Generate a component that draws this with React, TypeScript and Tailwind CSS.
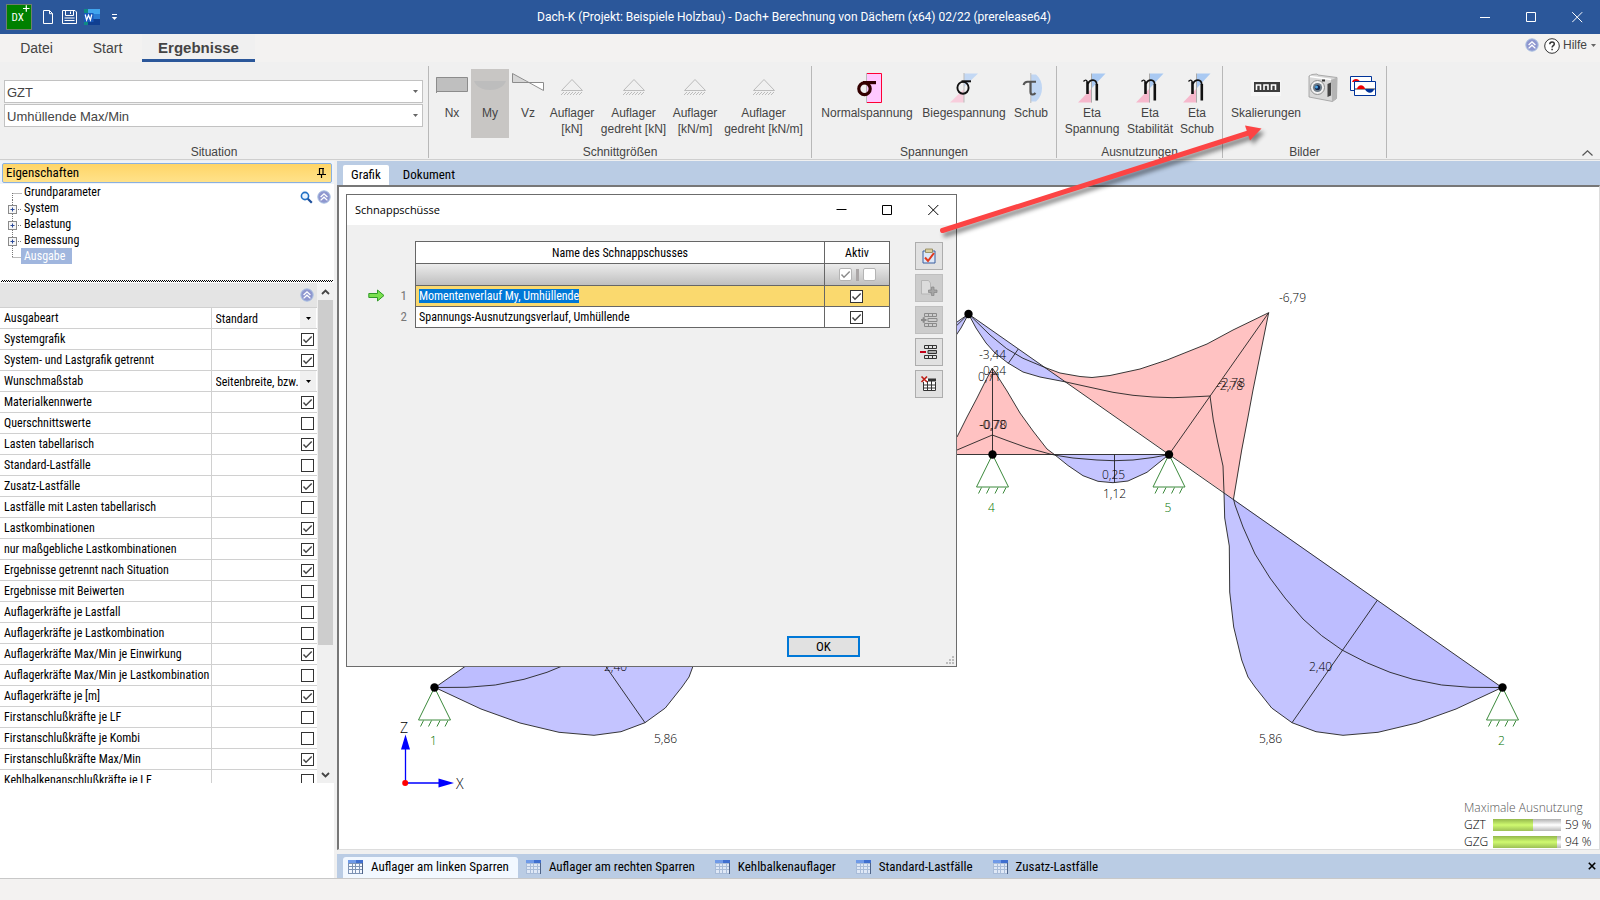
import type { ReactNode } from "react";

const ARIAL = "font-['Liberation_Sans',Arial,sans-serif]";
const COND = "font-['Roboto_Condensed','Liberation_Sans_Narrow','Liberation_Sans',sans-serif]";
const HUMANIST = "font-['Open_Sans','Noto_Sans',sans-serif]";

/* ---------- shared controls ---------- */

function Check({ label, on, dim }: { label: string; on: boolean; dim?: boolean }) {
  return (
    <span className="relative block size-[13px]">
      <input
        type="checkbox"
        defaultChecked={on}
        aria-label={label}
        className={`peer block size-[13px] appearance-none border bg-white ${dim ? "rounded-[2px] border-[#b4b4b4]" : "border-[#333]"}`}
      />
      <svg viewBox="0 0 13 13" className="pointer-events-none absolute inset-0 hidden size-[13px] peer-checked:block">
        <path d="M2.5 6.5 5 9.3 10.7 3.4" fill="none" stroke={dim ? "#8a8a8a" : "#444"} strokeWidth="1.4" />
      </svg>
    </span>
  );
}

function CollapseIcon() {
  return (
    <svg viewBox="0 0 14 14" className="size-[14px] shrink-0">
      <circle cx="7" cy="7" r="6.2" fill="#8f97cf" stroke="#a9c0e2" strokeWidth="1" />
      <path d="M3.6 7 7 3.8 10.4 7M3.6 10.4 7 7.2 10.4 10.4" fill="none" stroke="#fff" strokeWidth="1.3" />
    </svg>
  );
}

/* ---------- title bar ---------- */

function TitleBar() {
  const win = "flex h-full w-[46px] items-center justify-center";
  return (
    <header className={`grid h-[34px] shrink-0 grid-cols-[1fr_auto_1fr] items-center bg-[#2b579a] text-white ${ARIAL}`}>
      <div className="flex items-center pl-[6px]">
        <svg viewBox="0 0 26 26" className="size-[26px]" aria-label="Dach+">
          <rect x=".5" y=".5" width="25" height="25" fill="#008000" stroke="#6f7f6f" />
          <text x="5.500" y="16.500" fill="#fff" fontSize="11" fontFamily="Roboto Condensed">DX</text>
          <path d="M17 4.500h6.500M20.300 1.300v6.500" stroke="#fff" strokeWidth="1.200" />
        </svg>
        <button aria-label="Neu" className="ml-[11px]">
          <svg viewBox="0 0 12 16" className="h-[16px] w-[12px]">
            <path d="M.5 1.500h6l3 3V14.500H.5zM6.500 1.500v3.200h3" fill="none" stroke="#fff" />
          </svg>
        </button>
        <button aria-label="Speichern" className="ml-[7px]">
          <svg viewBox="0 0 16 16" className="size-[16px]">
            <path d="M.5 1.500h12.500l1.500 1.500v11.500h-14zM3.500 1.500v5h8v-5M8.500 2.500v2.500M2.500 9h10M2.500 11.500h10" fill="none" stroke="#fff" />
          </svg>
        </button>
        <button aria-label="Word" className="ml-[6px]">
          <svg viewBox="0 0 16 16" className="size-[16px]">
            <path d="M4 0h12v5H4z" fill="#41a5ee" />
            <path d="M4 5h12v5H4z" fill="#2b7cd3" />
            <path d="M4 10h12v6H4z" fill="#103f91" />
            <path d="M0 0h4v16H0z" fill="#0f8a84" />
            <path d="M0 4h9.500v9H0z" fill="#185abd" />
            <path d="m1.200 5.500 1.400 5.500L4.500 6.200 6.400 11l1.400-5.500" fill="none" stroke="#fff" strokeWidth="1.200" />
          </svg>
        </button>
        <button aria-label="Schnellzugriff anpassen" className="ml-[11px]">
          <svg viewBox="0 0 7 7" className="size-[7px]">
            <path d="M1 .5h5" stroke="#fff" />
            <path d="M.8 3h5.400L3.500 6z" fill="#fff" />
          </svg>
        </button>
      </div>
      <h1 className="pr-[12px] font-['Roboto','Liberation_Sans',sans-serif] text-[12px] leading-[16px] font-normal">
        Dach-K (Projekt: Beispiele Holzbau) - Dach+ Berechnung von Dächern (x64) 02/22 (prerelease64)
      </h1>
      <div className="flex h-full justify-end">
        <button aria-label="Minimieren" className={win}>
          <svg viewBox="0 0 11 11" className="size-[11px]"><path d="M0 5.500h10" stroke="#fff" /></svg>
        </button>
        <button aria-label="Maximieren" className={win}>
          <svg viewBox="0 0 11 11" className="size-[11px]"><path d="M.5.500h9v9H.5z" fill="none" stroke="#fff" /></svg>
        </button>
        <button aria-label="Schließen" className={win}>
          <svg viewBox="0 0 11 11" className="size-[11px]"><path d="m.2.200 10 10m0-10-10 10" stroke="#fff" /></svg>
        </button>
      </div>
    </header>
  );
}

function MenuTabs() {
  return (
    <nav className={`flex h-[28px] shrink-0 bg-[#f3f2f1] text-[14px] text-[#444] ${ARIAL}`}>
      <a href="#datei" className="w-[73px] text-center leading-[28px]">Datei</a>
      <a href="#start" className="w-[69px] text-center leading-[28px]">Start</a>
      <a href="#ergebnisse" className="w-[113px] border-b-[3px] border-[#2b579a] bg-[#f0f0f0] text-center text-[15px] leading-[28px] font-bold">
        Ergebnisse
      </a>
      <div className="ml-auto flex items-start gap-[5px] pt-[3px] pr-[4px]">
        <button aria-label="Menüband" className="pt-[1px]"><CollapseIcon /></button>
        <button className="flex items-center gap-[3px] text-[12px] leading-[17px]">
          <svg viewBox="0 0 16 16" className="size-[16px]">
            <circle cx="8" cy="8" r="7.300" fill="#fff" stroke="#333" />
            <path d="M5.800 6.200c0-3 4.500-3 4.500-.2 0 1.700-2.200 1.700-2.200 3.500M8.100 10.800v1.500" fill="none" stroke="#333" strokeWidth="1.500" />
          </svg>
          Hilfe
          <svg viewBox="0 0 5 3" className="ml-[1px] h-[3px] w-[5px]"><path d="M0 0h5L2.500 3z" fill="#666" /></svg>
        </button>
      </div>
    </nav>
  );
}

/* ---------- ribbon ---------- */

function Icon({ children }: { children: ReactNode }) {
  return <svg viewBox="0 0 32 32" className="size-[32px] shrink-0 overflow-visible">{children}</svg>;
}

function BearingIcon() {
  return (
    <Icon>
      <path d="M16 7.500 5.500 18.500h21z" fill="none" stroke="#bbb" />
      <path d="m5 23 3-3m0 3 3-3m0 3 3-3m0 3 3-3m0 3 3-3m0 3 3-3m0 3 3-3" stroke="#bbb" />
    </Icon>
  );
}

/* Greek letters are drawn as strokes, like the other ribbon symbols. */
function EtaIcon() {
  return (
    <Icon>
      <path d="M16 1.500h13.500L16 16z" fill="#a9c9f2" />
      <path d="M2 30.500 16 16v14.500z" fill="#f6b8cc" />
      <path d="M15.500 1.500v29" stroke="#aaa" />
      <path d="M7.500 9.500C9 7.500 11 7.500 11.200 10" fill="none" stroke="#111" strokeWidth="1.300" />
      <path d="M11.500 9.500V22M20.800 12v16.500" fill="none" stroke="#111" strokeWidth="2.600" />
      <path d="M12 12c2-5 8.500-5.500 8.800 1" fill="none" stroke="#111" strokeWidth="1.700" />
    </Icon>
  );
}

function RibbonButton({ w, icon, label, active }: { w: string; icon: ReactNode; label: string[]; active?: boolean }) {
  return (
    <button className={`flex h-[69px] shrink-0 flex-col items-center pt-[3px] leading-[16px] ${w} ${active ? "bg-[#c8c6c4]" : ""}`}>
      {icon}
      <span className="mt-[1px] flex flex-col items-center whitespace-nowrap">
        {label.map((l) => <span key={l}>{l}</span>)}
      </span>
    </button>
  );
}

function Group({ w, title, children }: { w: string; title: string; children: ReactNode }) {
  return (
    <section className={`flex h-[92px] shrink-0 flex-col justify-between border-r border-[#b8b8b8] ${w}`}>
      {children}
      <h2 className="text-center text-[12px] leading-[12px] font-normal">{title}</h2>
    </section>
  );
}

function Combo({ label, value }: { label: string; value: string }) {
  return (
    <span className="relative block">
      <select aria-label={label} className="block h-[23px] w-full appearance-none border border-[#c2c2c2] bg-white px-[2px] pt-[2px] text-[13px] text-[#444]">
        <option>{value}</option>
      </select>
      <svg viewBox="0 0 5 3" className="pointer-events-none absolute top-[10px] right-[5px] h-[3px] w-[5px]"><path d="M0 0h5L2.500 3z" fill="#666" /></svg>
    </span>
  );
}

function Ribbon() {
  return (
    <div className={`flex h-[98px] shrink-0 border-b border-[#cfcfcf] bg-[#f0f0f0] pt-[4px] text-[12px] text-[#444] ${ARIAL}`}>
      <Group w="w-[429px]" title="Situation">
        <div className="flex flex-col gap-[1px] pt-[14px] pr-[5px] pl-[4px]">
          <Combo label="Situation" value="GZT" />
          <Combo label="Umhüllende" value="Umhüllende Max/Min" />
        </div>
      </Group>
      <Group w="w-[383px]" title="Schnittgrößen">
        <div className="flex pt-[3px] pl-[4px]">
          <RibbonButton w="w-[38px]" label={["Nx"]} icon={<Icon><path d="M.5 5.500h31v14H.5zV21" fill="#bfbfbf" stroke="#8c8c8c" /></Icon>} />
          <RibbonButton active w="w-[38px]" label={["My"]} icon={<Icon><path d="M0 9h32c-4 12-28 12-32 0z" fill="#bdbdbd" /></Icon>} />
          <RibbonButton
            w="w-[38px]"
            label={["Vz"]}
            icon={<Icon><path d="M.5 1.500v9h15z" fill="#d6d6d6" /><path d="M31.500 10.500h-16l16 8z" fill="#fff" /><path d="M.5 1.500v9h31v8L.5 1.500" fill="none" stroke="#8c8c8c" /></Icon>}
          />
          <RibbonButton w="w-[50px]" label={["Auflager", "[kN]"]} icon={<BearingIcon />} />
          <RibbonButton w="w-[73px]" label={["Auflager", "gedreht [kN]"]} icon={<BearingIcon />} />
          <RibbonButton w="w-[50px]" label={["Auflager", "[kN/m]"]} icon={<BearingIcon />} />
          <RibbonButton w="w-[87px]" label={["Auflager", "gedreht [kN/m]"]} icon={<BearingIcon />} />
        </div>
      </Group>
      <Group w="w-[245px]" title="Spannungen">
        <div className="flex pt-[3px] pl-[5px]">
          <RibbonButton
            w="w-[100px]"
            label={["Normalspannung"]}
            icon={
              <Icon>
                <path d="M16 1.500h15v29H16" fill="#ffc8ff" />
                <path d="M16 1.500h14.500v29H16" fill="none" stroke="#ff0033" />
                <path d="M15.500 1v30" stroke="#bbb" />
                <ellipse cx="13.500" cy="16.800" rx="5.700" ry="5.900" fill="none" stroke="#300" strokeWidth="3.200" />
                <path d="M12 9h13v3.200H12z" fill="#300" />
              </Icon>
            }
          />
          <RibbonButton
            w="w-[94px]"
            label={["Biegespannung"]}
            icon={
              <Icon>
                <path d="M16 1.500h14L16 15z" fill="#c3d8f4" />
                <path d="M2 30.500 16 17v13.500z" fill="#f8cddc" />
                <path d="M16 1v29.500" stroke="#bbb" />
                <ellipse cx="15" cy="15.800" rx="5.600" ry="5.900" fill="none" stroke="#111" strokeWidth="1.900" />
                <path d="M13.500 8.300h9.500v2h-9.500z" fill="#111" />
              </Icon>
            }
          />
          <RibbonButton
            w="w-[40px]"
            label={["Schub"]}
            icon={
              <Icon>
                <path d="M16 2.500h5c8 6 8 21 0 27h-5z" fill="#c0d6f3" />
                <path d="M15.800 1v30" stroke="#bbb" />
                <path d="M8.500 13c.8-2.700 2-3.300 4-3.300h8.500" fill="none" stroke="#555" strokeWidth="2" />
                <path d="M15.500 10v9.500c0 4 3 3.500 5 1.500" fill="none" stroke="#555" strokeWidth="2.200" />
              </Icon>
            }
          />
        </div>
      </Group>
      <Group w="w-[166px]" title="Ausnutzungen">
        <div className="flex pt-[3px] pl-[4px]">
          <RibbonButton w="w-[62px]" label={["Eta", "Spannung"]} icon={<EtaIcon />} />
          <RibbonButton w="w-[54px]" label={["Eta", "Stabilität"]} icon={<EtaIcon />} />
          <RibbonButton w="w-[40px]" label={["Eta", "Schub"]} icon={<EtaIcon />} />
        </div>
      </Group>
      <Group w="w-[164px]" title="Bilder">
        <div className="flex pt-[3px] pl-[4px]">
          <RibbonButton
            w="w-[78px]"
            label={["Skalierungen"]}
            icon={<Icon><path d="M1 8h30v16H1z" fill="#f6f6f6" /><path d="M4 10h26v10H4z" fill="#3c3c3c" /><path d="M6.500 18v-5h4v5m3.500 0v-5h4v5m3.500 0v-5h4v5" fill="none" stroke="#fff" strokeWidth="1.600" /></Icon>}
          />
          <RibbonButton
            w="w-[36px]"
            label={[]}
            icon={
              <Icon>
                <path d="m2 4 3-1.500 5-.5 1 1 19 2.500-.5 21-4 3L2 25z" fill="#d9d9d9" stroke="#9a9a9a" strokeWidth=".8" />
                <path d="m24 8 6-2.500-.5 21-4.500 3z" fill="#b4b4b4" />
                <path d="m3 4.500 21 3" stroke="#fff" strokeWidth="1.500" />
                <path d="m20.500 12 3.500-1.500v13L20.500 25z" fill="#444" />
                <circle cx="10.500" cy="15.500" r="7" fill="#f1f1f1" stroke="#8f8f8f" />
                <circle cx="10.500" cy="15.500" r="4.600" fill="#6f7c88" />
                <circle cx="10.500" cy="15.500" r="2.600" fill="#16294d" />
                <circle cx="9.500" cy="15" r="1.500" fill="#49a3e6" />
                <path d="M15 7.500h3v2h-3z" fill="#333" />
              </Icon>
            }
          />
          <RibbonButton
            w="w-[44px]"
            label={[]}
            icon={
              <Icon>
                <path d="M3.500 4.500h21v14h-21z" fill="#fff" stroke="#039" />
                <path d="M5 10c1-4 7-4 8 0z" fill="#e00" />
                <path d="M7.500 9.500h21v14h-21z" fill="#fff" stroke="#039" />
                <path d="M8 17h20" stroke="#333" />
                <path d="M10 17c1-5 7-5 8 0z" fill="#e00" />
                <path d="M18 17h9c-1 5-7 5-9 0z" fill="#039" />
              </Icon>
            }
          />
        </div>
      </Group>
      <button aria-label="Menüband reduzieren" className="mt-auto mr-[7px] mb-[3px] ml-auto">
        <svg viewBox="0 0 11 6" className="h-[6px] w-[11px]"><path d="M.5 5.500 5.500.800l5 4.700" fill="none" stroke="#555" strokeWidth="1.200" /></svg>
      </button>
    </div>
  );
}

/* ---------- properties panel ---------- */

const TREE: { name: string; kind: "first" | "node" | "last" }[] = [
  { name: "Grundparameter", kind: "first" },
  { name: "System", kind: "node" },
  { name: "Belastung", kind: "node" },
  { name: "Bemessung", kind: "node" },
  { name: "Ausgabe", kind: "last" },
];

const PROPS: [string, boolean | string][] = [
  ["Ausgabeart", "Standard"],
  ["Systemgrafik", true],
  ["System- und Lastgrafik getrennt", true],
  ["Wunschmaßstab", "Seitenbreite, bzw."],
  ["Materialkennwerte", true],
  ["Querschnittswerte", false],
  ["Lasten tabellarisch", true],
  ["Standard-Lastfälle", false],
  ["Zusatz-Lastfälle", true],
  ["Lastfälle mit Lasten tabellarisch", false],
  ["Lastkombinationen", true],
  ["nur maßgebliche Lastkombinationen", true],
  ["Ergebnisse getrennt nach Situation", true],
  ["Ergebnisse mit Beiwerten", false],
  ["Auflagerkräfte je Lastfall", false],
  ["Auflagerkräfte je Lastkombination", false],
  ["Auflagerkräfte Max/Min je Einwirkung", true],
  ["Auflagerkräfte Max/Min je Lastkombination", false],
  ["Auflagerkräfte je [m]", true],
  ["Firstanschlußkräfte je LF", false],
  ["Firstanschlußkräfte je Kombi", false],
  ["Firstanschlußkräfte Max/Min", true],
  ["Kehlbalkenanschlußkräfte je LF", false],
];

function TreeLines({ kind }: { kind: string }) {
  return (
    <svg viewBox="0 0 22 16" className="h-[16px] w-[22px]">
      <path
        d={kind === "first" ? "M12.500 9v7M12.500 9.500h9" : kind === "last" ? "M12.500 0v9M12.500 9.500h9" : "M12.500 0v16M16 9.500h5"}
        stroke="#777"
        strokeDasharray="1 1"
      />
      {kind === "node" && (
        <>
          <rect x="8.500" y="5.500" width="8" height="8" fill="#f6f6f6" stroke="#8a8a8a" />
          <path d="M10.500 9.500h4M12.500 7.500v4" stroke="#2b4a9a" />
        </>
      )}
    </svg>
  );
}

function PropertiesPanel() {
  return (
    <aside className={`flex w-[334px] shrink-0 flex-col bg-white text-[12px] text-black ${COND}`}>
      <div className="bg-[#eef3fa] px-[2px] pt-[2px] pb-[1px]">
        <h2 className="flex h-[20px] items-center justify-between rounded-[2px] border border-[#8ab0e0] bg-linear-to-b from-[#ffd566] to-[#ffe28a] pr-[5px] pl-[3px] text-[13px] font-normal">
          Eigenschaften
          <svg viewBox="0 0 9 10" className="h-[10px] w-[9px]"><path d="M2.500 0v6M0 6.500h9M4.500 7v3M2 .500h5M6 0v6" stroke="#000" fill="none" strokeWidth="1.200" /></svg>
        </h2>
      </div>
      <div className="flex h-[96px] items-start justify-between">
        <ul>
          {TREE.map((t) => (
            <li key={t.name} className="flex h-[16px] items-center">
              <TreeLines kind={t.kind} />
              <a
                href={`#${t.name}`}
                className={`h-[16px] leading-[16px] ${t.kind === "last" ? "-ml-px bg-[#a0b6de] pr-[7px] pl-[3px] text-white" : "pl-[2px]"}`}
              >
                {t.name}
              </a>
            </li>
          ))}
        </ul>
        <div className="flex items-center gap-[4px] pt-[6px] pr-[3px]">
          <button aria-label="Suchen">
            <svg viewBox="0 0 13 13" className="size-[13px]"><circle cx="5" cy="5" r="3.600" fill="#e8f3ff" stroke="#1f6fc4" strokeWidth="1.600" /><path d="m7.800 7.800 4 4" stroke="#1d4f9c" strokeWidth="2.200" /></svg>
          </button>
          <button aria-label="Alle einklappen"><CollapseIcon /></button>
        </div>
      </div>
      <div className="mx-px h-[2px] shrink-0 bg-[repeating-conic-gradient(#000_0_25%,#fff_0_50%)] bg-[length:2px_2px]" />
      <div className="mt-[1px] mb-[95px] flex min-h-0 flex-1 overflow-hidden">
        <div className="min-w-0 flex-1 overflow-hidden">
          <div className="flex h-[24px] items-center justify-end bg-[#e4e4e4] pr-[3px]"><CollapseIcon /></div>
          <table className="w-full table-fixed border-collapse">
            <tbody>
              {PROPS.map(([name, value]) => (
                <tr key={name} className="h-[21px] border-t border-[#d0d0d0]">
                  <th scope="row" className="w-[211px] border-r border-[#d0d0d0] p-0 pl-[4px] text-left font-normal whitespace-nowrap">{name}</th>
                  <td className="p-0">
                    {typeof value === "boolean" ? (
                      <div className="flex justify-end pr-[3px]"><Check label={name} on={value} /></div>
                    ) : (
                      <div className="relative mr-px flex">
                        <select aria-label={name} className="h-[20px] w-full appearance-none overflow-hidden bg-white pt-px pr-[18px] pl-[4px]">
                          <option>{value}</option>
                        </select>
                        <span className="pointer-events-none absolute inset-y-0 right-0 flex w-[16px] items-center justify-center bg-[#f0f0f0]">
                          <svg viewBox="0 0 5 3" className="h-[3px] w-[5px]"><path d="M0 0h5L2.500 3z" fill="#000" /></svg>
                        </span>
                      </div>
                    )}
                  </td>
                </tr>
              ))}
            </tbody>
          </table>
        </div>
        <div className="flex w-[17px] flex-col items-center justify-between bg-[#f0f0f0]">
          <svg viewBox="0 0 15 17" className="h-[17px] w-[15px]"><path d="M4 11 7.500 7.500 11 11" fill="none" stroke="#444" strokeWidth="1.800" /></svg>
          <div className="mb-auto h-[345px] w-[15px] bg-[#cdcdcd]" />
          <svg viewBox="0 0 15 17" className="h-[17px] w-[15px]"><path d="M4 7 7.500 10.500 11 7" fill="none" stroke="#444" strokeWidth="1.800" /></svg>
        </div>
      </div>
    </aside>
  );
}

/* ---------- bending moment diagram ---------- */

const BLUE = "#0000ff";
const RED = "#ff0000";

function Support({ x, y, n }: { x: number; y: number; n: string }) {
  return (
    <g>
      <path
        d={`M${x} ${y}l-16 32.500h32zM${x - 11} ${y + 33}l-3 6M${x - 3} ${y + 33}l-3 6M${x + 5.500} ${y + 33}l-3 6M${x + 13.500} ${y + 33}l-3 6`}
        fill="none"
        stroke="#3c8a3c"
      />
      <circle cx={x} cy={y} r="4.200" fill="#000" />
      <text x={x - 1} y={y + 57.500} textAnchor="middle" fill="#007000" className="font-light">{n}</text>
    </g>
  );
}

/* One rafter with both envelope lines; the left half of the roof is its mirror image. */
function Rafter() {
  return (
    <g stroke="none">
      <path
        d="M968.500 314 976 328 986 343 995 353 1008 363 1023 372 1040 377 1066 382z"
        fill={BLUE} fillOpacity=".23"
      />
      <path
        d="M1045 367.500 1060 373 1080 376.500 1092 377.500 1110 375.500 1140 369 1167 360 1207 344 1233 330 1268.700 312.700 1253 390 1242 450 1233.500 499z"
        fill={RED} fillOpacity=".24"
      />
      <path
        d="M1224 492.500 1224.700 518 1229.300 546 1229.700 592 1233.700 627 1241.700 660 1248 677 1255 687 1271.700 708 1292 722.700 1316 731.700 1343 735.300 1378 732.300 1417 723 1456 709 1502 687.500z"
        fill={BLUE} fillOpacity=".23"
      />
      <path
        d="M1233.500 499 1243 527 1255 554 1270 578 1285 598 1303 619 1321.700 635.700 1342 650 1366.700 662.700 1390 672.300 1413 679.300 1441.700 685 1470 687.300 1502 687.500z"
        fill={BLUE} fillOpacity=".03"
      />
      <g fill="none" stroke="#222" strokeWidth=".9">
        <path d="M968.500 314 1169 454.500 1502 687.500" />
        <path d="M968.500 314 976 328 986 343 995 353 1008 363 1023 372 1040 377 1066 382 1090 387.300 1113 392.300 1133 395.300 1153 397 1173 397.700 1190 397 1210 396 1213.300 420 1217.700 442 1223 466 1224 492.500 1224.700 518 1229.300 546 1229.700 592 1233.700 627 1241.700 660 1248 677 1255 687 1271.700 708 1292 722.700 1316 731.700 1343 735.300 1378 732.300 1417 723 1456 709 1502 687.500" />
        <path d="M968.500 314 990 335 1006.700 348.700 1023 358.300 1045 367.500 1060 373 1080 376.500 1092 377.500 1110 375.500 1140 369 1167 360 1207 344 1233 330 1268.700 312.700 1253 390 1248 417 1241.700 450 1233.500 499 1235 505 1243 527 1255 554 1270 578 1285 598 1303 619 1321.700 635.700 1342 650 1366.700 662.700 1390 672.300 1413 679.300 1441.700 685 1470 687.300 1502 687.500" />
        <path d="M1169 454.500 1268.700 312.700M1377.300 600.300 1292 722.700M1018.300 349 1008.300 363.300" />
      </g>
    </g>
  );
}

const LABELS: [number, number, string][] = [
  [1279, 302, "-6,79"], [979, 359, "-3,44"], [983, 375, "0,24"], [978, 381, "0,71"], [979, 429, "-0,78"], [980, 429, "-0,70"],
  [1218, 387, "-2,78"], [1216, 390, "-2,78"], [1102, 479, "0,25"], [1103, 498, "1,12"], [1309, 671, "2,40"], [604, 671, "2,40"],
  [1259, 743, "5,86"], [654, 743, "5,86"],
];

function Diagram() {
  return (
    <svg viewBox="339 187 1259 661" className={`absolute top-0 left-0 h-[661px] w-[1259px] text-[12px] ${HUMANIST}`} role="img" aria-label="Momentenverlauf">
      <Rafter />
      <g transform="translate(1937 0) scale(-1 1)"><Rafter /></g>
      <path d="M940 454.500V470L957 437 967 417 977 398 985 382 992.300 368 1007 391 1020 413 1033 431 1047 449 1055 454.500z" fill={RED} fillOpacity=".24" />
      <path d="M1055 454.500 1068 465.500 1083 475.700 1098 481.300 1113 482.700 1128 481 1147 472.300 1169 454.500z" fill={BLUE} fillOpacity=".23" />
      <g fill="none" stroke="#222" strokeWidth=".9">
        <path d="M957 437 967 417 977 398 985 382 992.300 368 1007 391 1020 413 1033 431 1047 449 1055 455 1068 465.500 1083 475.700 1098 481.300 1113 482.700 1128 481 1147 472.300 1169 454.500" />
        <path d="M957 450 992.300 435 1007 440.500 1027 447.700 1050 454 1057 455.500 1073 458 1097 460 1114 460.700 1133 460 1153 457.500 1169 454.500" />
        <path d="M940 454.500H1169M992.500 368v86M1114.500 454.500v28" />
      </g>
      <circle cx="968.500" cy="314" r="4.200" fill="#000" />
      <Support x={434.500} y={687.500} n="1" />
      <Support x={1502.500} y={687.500} n="2" />
      <Support x={992.500} y={454.500} n="4" />
      <Support x={1169} y={454.500} n="5" />
      <g className="font-light" fill="#000">
        {LABELS.map(([x, y, t], i) => <text key={i} x={x} y={y}>{t}</text>)}
      </g>
      <g stroke="#00f" strokeWidth="1.300"><path d="M405.500 783V746M405.500 783H440" /></g>
      <path d="M405.500 734.500 410 749.500h-9zM454 783l-15.500-4.500v9z" fill="#00f" />
      <circle cx="405.200" cy="783" r="3" fill="#f00" />
      <g className="text-[14px] font-light" fill="#000"><text x="400" y="733">Z</text><text x="456" y="789">X</text></g>
    </svg>
  );
}

function Usage({ name, value }: { name: string; value: number }) {
  return (
    <div className="flex h-[17px] items-center">
      <dt className="w-[29px]">{name}</dt>
      <dd className="flex items-center">
        <span className="block h-[12px] w-[68px] bg-linear-to-b from-[#b0b0b0] via-white to-[#b8b8b8]">
          <span className="block h-full bg-linear-to-b from-[#94b84c] via-[#d0fa70] to-[#9cc055]" style={{ width: `${value}%` }} />
        </span>
        <span className="pl-[4px] whitespace-nowrap">{value} %</span>
      </dd>
    </div>
  );
}

/* ---------- snapshot dialog ---------- */

const row = <path d="M4.500 1.500h12v3h-12zM8.500 1.500v3M12.500 1.500v3" />;

const TOOLS: { name: string; off?: boolean; icon: ReactNode }[] = [
  {
    name: "Übernehmen",
    icon: (
      <>
        <path d="M2 3h12v12H2z" fill="#dce8f8" stroke="#3b5f9f" />
        <path d="M4.500 1h7v3.500h-7z" fill="#d9cfa0" stroke="#8c8252" strokeWidth=".8" />
        <path d="M4 9.500 7 13l6-8" fill="none" stroke="#e03a1e" strokeWidth="2" />
      </>
    ),
  },
  {
    name: "Neu",
    off: true,
    icon: (
      <>
        <path d="M.5.500h7l2 2.500v11h-9z" fill="#dcdcdc" stroke="#b5b5b5" />
        <path d="M7.500 10h3V7h2.500v3h3v2.500h-3v3h-2.500v-3h-3z" fill="#a5a5a5" stroke="#858585" strokeWidth=".7" />
      </>
    ),
  },
  {
    name: "Zeile einfügen",
    off: true,
    icon: (
      <g fill="none" stroke="#8a8a8a" transform="translate(-1 0)">
        {row}
        <path d="M8 6.500h9v3H8zM1 8h6M4 5v6M4.500 11.500h12v3h-12zM8.500 11.500v3M12.500 11.500v3" />
        <path d="M1 8h5M3.500 5.500v5" strokeWidth="1.800" />
      </g>
    ),
  },
  {
    name: "Zeile löschen",
    icon: (
      <g fill="none" stroke="#333" transform="translate(-1 0)">
        {row}
        <path d="M8 6.500h8.500v3H8z" fill="#aaa" />
        <path d="M4.500 11.500h12v3h-12zM8.500 11.500v3M12.500 11.500v3" />
        <path d="M0 8h6" stroke="#c00018" strokeWidth="2" />
      </g>
    ),
  },
  {
    name: "Alle löschen",
    icon: (
      <g fill="none" stroke="#333">
        <path d="M3 3h12v12H3z" fill="#fff" stroke="none" />
        <path d="M2.500 6v8.500h12V6M2.500 9h12M2.500 12h12M6.500 5v9.500M10.500 5v9.500" />
        <path d="M7 4h8" strokeWidth="3" />
        <path d="m.5.500 5.500 5.500m0-5.500L.5 6" stroke="#c02018" strokeWidth="1.700" />
      </g>
    ),
  },
];

function SnapshotDialog() {
  const cell = "border border-[#666] p-0";
  return (
    <div
      role="dialog"
      aria-label="Schnappschüsse"
      className={`absolute top-[7px] left-[7px] flex h-[473px] w-[611px] flex-col border border-[#6c6c6c] bg-[#f0f0f0] text-[12px] ${COND}`}
    >
      <div className="flex h-[30px] shrink-0 items-center bg-white pl-[8px]">
        <h2 className={`text-[11px] font-normal ${HUMANIST}`}>Schnappschüsse</h2>
        <div className="ml-auto flex h-full">
          <button aria-label="Minimieren" className="flex w-[46px] items-center justify-center">
            <svg viewBox="0 0 11 11" className="size-[11px]"><path d="M.5 4.500h10" stroke="#000" /></svg>
          </button>
          <button aria-label="Maximieren" className="flex w-[46px] items-center justify-center">
            <svg viewBox="0 0 11 11" className="size-[11px]"><path d="M.5.500h9v9h-9z" fill="none" stroke="#000" /></svg>
          </button>
          <button aria-label="Schließen" className="flex w-[46px] items-center justify-center">
            <svg viewBox="0 0 11 11" className="size-[11px]"><path d="m.3 0 10 10m0-10-10 10" stroke="#000" /></svg>
          </button>
        </div>
      </div>
      <div className="flex flex-1 items-start pt-[16px] pl-[21px]">
        <div className="flex w-[47px] flex-col pt-[44px] text-[#777]">
          <div className="flex h-[21px] items-center justify-between pr-[8px]">
            <svg viewBox="0 0 17 13" className="h-[13px] w-[17px]"><path d="M.8 4.500h8.700V1l6.500 5.500-6.500 5.500V8.500H.8z" fill="#7be04f" stroke="#2f9a26" /></svg>
            <span className="text-[13px]">1</span>
          </div>
          <div className="flex h-[21px] items-center justify-end pr-[8px] text-[13px]">2</div>
        </div>
        <table className="w-[475px] table-fixed border-collapse bg-white">
          <thead>
            <tr className="h-[22px]">
              <th scope="col" className={`font-normal ${cell}`}>Name des Schnappschusses</th>
              <th scope="col" className={`w-[65px] font-normal ${cell}`}>Aktiv</th>
            </tr>
            <tr className="h-[22px] bg-linear-to-b from-[#ececec] to-[#bdbdbd]">
              <td className={cell} />
              <td className={cell}>
                <div className="flex items-center justify-center gap-[4px]">
                  <Check label="Alle aktivieren" on dim />
                  <span className="block h-[12px] w-[3px] bg-[#aaa6a6]" />
                  <Check label="Alle deaktivieren" on={false} dim />
                </div>
              </td>
            </tr>
          </thead>
          <tbody>
            {["Momentenverlauf My, Umhüllende", "Spannungs-Ausnutzungsverlauf, Umhüllende"].map((s, i) => (
              <tr key={s} className={`h-[21px] ${i === 0 ? "bg-[#fad96e]" : ""}`}>
                <td className={cell}>
                  <div className="pl-[3px] leading-[14px]">
                    <span className={i === 0 ? "bg-[#0078d7] text-white" : ""}>{s}</span>
                  </div>
                </td>
                <td className={cell}><div className="flex justify-center pr-px"><Check label={s} on /></div></td>
              </tr>
            ))}
          </tbody>
        </table>
        <div className="flex flex-col gap-[4px] pt-[1px] pl-[25px]">
          {TOOLS.map((t) => (
            <button
              key={t.name}
              aria-label={t.name}
              className={`flex size-[28px] items-center justify-center border ${t.off ? "border-[#bfbfbf] bg-[#cccccc]" : "border-[#adadad] bg-[#e1e1e1]"}`}
            >
              <svg viewBox="0 0 16 16" className="size-[16px] overflow-visible">{t.icon}</svg>
            </button>
          ))}
        </div>
      </div>
      <div className="flex justify-end pr-[96px] pb-[9px]">
        <button className="h-[21px] w-[73px] border-2 border-[#0078d7] bg-[#e1e1e1] text-[13px] leading-[16px]">OK</button>
      </div>
      <svg viewBox="0 0 8 8" className="absolute right-[2px] bottom-[2px] size-[8px]">
        <path d="M6 0h2v2H6zM3 3h2v2H3zM6 3h2v2H6zM0 6h2v2H0zM3 6h2v2H3zM6 6h2v2H6z" fill="#bdbdbd" />
      </svg>
    </div>
  );
}

/* ---------- document area ---------- */

function GridIcon({ active }: { active: boolean }) {
  return (
    <svg viewBox="0 0 15 14" className="h-[14px] w-[15px] shrink-0">
      <path d="M0 0h15v14H0z" fill={active ? "#7d93b4" : "#a9bcd8"} />
      <path d="M0 0h15v3H0z" fill="#6f9ae8" />
      <path d="M8 0h7v3H8z" fill="#3f6fd0" />
      <path d="M14 3h1v11h-1z" fill="#4f6488" />
      <path d="M1 4h3v2H1zM5 4h2v2H5zM8 4h3v2H8zM12 4h2v2h-2zM1 7h3v2H1zM5 7h2v2H5zM8 7h3v2H8zM12 7h2v2h-2zM1 10h3v3H1zM5 10h2v3H5zM8 10h3v3H8zM12 10h2v3h-2z" fill={active ? "#f4f8ff" : "#dfe8f6"} />
    </svg>
  );
}

function Workspace() {
  return (
    <main className="flex min-w-0 flex-1 flex-col">
      <nav className={`flex h-[24px] shrink-0 items-end bg-[#bacce4] pl-[6px] text-[13px] text-black ${COND}`}>
        <a href="#grafik" className="h-[20px] rounded-t-[2px] bg-white px-[8px] leading-[19px]">Grafik</a>
        <a href="#dokument" className="h-[20px] px-[14px] leading-[19px]">Dokument</a>
      </nav>
      <div className="relative min-h-0 flex-1 overflow-hidden border-t-2 border-r border-b border-l-2 border-t-[#777] border-r-[#ddd] border-b-[#ddd] border-l-[#777] bg-white">
        <Diagram />
        <SnapshotDialog />
        <dl className={`absolute right-[3px] bottom-[-1px] w-[132px] text-[12px] font-light text-black ${HUMANIST}`}>
          <div className="leading-[17px] whitespace-nowrap text-[#555]">Maximale Ausnutzung</div>
          <Usage name="GZT" value={59} />
          <Usage name="GZG" value={94} />
        </dl>
      </div>
      <nav className={`mt-[4px] flex h-[24px] shrink-0 items-end bg-[#bacce4] pl-[6px] text-[13px] text-black ${COND}`}>
        {["Auflager am linken Sparren", "Auflager am rechten Sparren", "Kehlbalkenauflager", "Standard-Lastfälle", "Zusatz-Lastfälle"].map((t, i) => (
          <a
            key={t}
            href={`#tab${i}`}
            className={`flex h-[21px] items-center gap-[8px] pb-px pl-[5px] whitespace-nowrap ${i === 0 ? "rounded-t-[3px] bg-[#f2f8ff] pr-[9px]" : "ml-[3px] pr-[12px]"}`}
          >
            <GridIcon active={i === 0} />
            {t}
          </a>
        ))}
        <button aria-label="Schließen" className="mr-[4px] ml-auto self-center">
          <svg viewBox="0 0 8 8" className="size-[8px]"><path d="m.8.800 6.400 6.400m0-6.400L.8 7.200" stroke="#000" strokeWidth="1.600" /></svg>
        </button>
      </nav>
    </main>
  );
}

function PointerArrow() {
  return (
    <svg viewBox="930 115 340 125" className="pointer-events-none absolute top-[115px] left-[930px] h-[125px] w-[340px] drop-shadow-[3px_4px_2px_rgba(0,0,0,0.45)]">
      <path d="M942.500 230.500 1250 132.500" stroke="#fc4444" strokeWidth="5" strokeLinecap="round" />
      <path d="M1261.500 128.500 1250 140.500 1245 125.500z" fill="#fc4444" />
    </svg>
  );
}

export default function App() {
  return (
    <div className="relative flex h-screen flex-col overflow-hidden bg-[#f0f0f0]">
      <TitleBar />
      <MenuTabs />
      <Ribbon />
      <div className="flex min-h-0 flex-1 gap-[3px] pt-[1px]">
        <PropertiesPanel />
        <Workspace />
      </div>
      <footer className="h-[22px] shrink-0 border-t border-[#c8c8c8] bg-[#f3f2f1]" />
      <PointerArrow />
    </div>
  );
}
